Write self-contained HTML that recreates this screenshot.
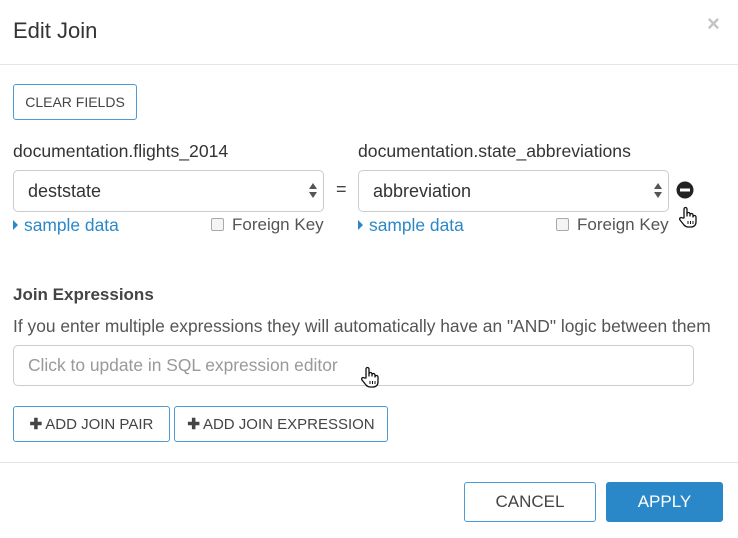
<!DOCTYPE html>
<html><head><style>
*{box-sizing:border-box;margin:0;padding:0}
body{width:738px;height:538px;background:#fff;font-family:"Liberation Sans",sans-serif;color:#444;position:relative;overflow:hidden}
.a{position:absolute}
.btn{position:absolute;border:1px solid #4a9bd6;border-radius:3px;background:#fff;color:#444;font-size:15px;display:flex;align-items:center;justify-content:center}
.sel{position:absolute;border:1px solid #ccc;border-radius:5px;height:42px;font-size:18px;color:#333;padding-left:14px;display:flex;align-items:center}
.lbl{font-size:17.6px;color:#333}
.link{font-size:17.4px;color:#2a88c8}
.cb{position:absolute;width:13px;height:13px;border:1px solid #aaa;border-radius:2px;background:#f4f4f4}
.fk{font-size:17px;color:#555}
.tri{display:inline-block;width:0;height:0;border-left:5px solid #2a88c8;border-top:5px solid transparent;border-bottom:5px solid transparent;margin-right:6px;vertical-align:1px}
</style></head><body>
<div class="a" style="left:13px;top:18px;font-size:22px;color:#333">Edit Join</div>
<div class="a" style="left:707px;top:11px;font-size:22px;color:#c4c4c4;font-weight:bold">×</div>
<div class="a" style="left:0;top:64px;width:738px;height:1px;background:#e5e5e5"></div>
<div class="btn" style="left:13px;top:84px;width:124px;height:36px;font-size:14px">CLEAR FIELDS</div>
<div class="a lbl" style="left:13px;top:141px">documentation.flights_2014</div>
<div class="a lbl" style="left:358px;top:141px">documentation.state_abbreviations</div>
<div class="sel" style="left:13px;top:170px;width:311px">deststate</div>
<div class="sel" style="left:358px;top:170px;width:311px">abbreviation</div>
<svg class="a" style="left:308px;top:182px" width="10" height="17"><path d="M5 1L9 7H1Z M5 16L9 10H1Z" fill="#555"/></svg>
<svg class="a" style="left:653px;top:182px" width="10" height="17"><path d="M5 1L9 7H1Z M5 16L9 10H1Z" fill="#555"/></svg>
<div class="a" style="left:336px;top:179px;font-size:18px;color:#444">=</div>
<svg class="a" style="left:676px;top:181px" width="18" height="18"><circle cx="9" cy="9" r="8.5" fill="#222"/><rect x="4" y="7.5" width="10" height="3" fill="#fff"/></svg>
<svg class="a" style="left:678px;top:206px" width="20" height="22" viewBox="0 0 20 22"><path d="M6 12V3a1.5 1.5 0 0 1 3 0v7V8a1.5 1.5 0 0 1 3 0v2V9a1.5 1.5 0 0 1 3 0v2a1.5 1.5 0 0 1 3 0v5c0 3-2 5-5 5H10c-2 0-3-1-4-2l-4-5a1.5 1.5 0 0 1 2.3-2Z" fill="#fff" stroke="#111" stroke-width="1.3" stroke-linejoin="round"/><path d="M10 15v3M12.5 15v3M15 15v3" stroke="#111" stroke-width="1"/></svg>
<div class="a link" style="left:13px;top:215px"><span class="tri"></span>sample data</div>
<div class="a link" style="left:358px;top:215px"><span class="tri"></span>sample data</div>
<div class="cb" style="left:211px;top:218px"></div><div class="a fk" style="left:232px;top:215px">Foreign Key</div>
<div class="cb" style="left:556px;top:218px"></div><div class="a fk" style="left:577px;top:215px">Foreign Key</div>
<div class="a" style="left:13px;top:285px;font-size:17px;font-weight:bold;color:#444">Join Expressions</div>
<div class="a" style="left:13px;top:316px;font-size:17.4px;color:#555">If you enter multiple expressions they will automatically have an "AND" logic between them</div>
<div class="sel" style="left:13px;top:345px;width:681px;height:41px;color:#999;font-size:17.4px">Click to update in SQL expression editor</div>
<svg class="a" style="left:360px;top:366px" width="20" height="22" viewBox="0 0 20 22"><path d="M6 12V3a1.5 1.5 0 0 1 3 0v7V8a1.5 1.5 0 0 1 3 0v2V9a1.5 1.5 0 0 1 3 0v2a1.5 1.5 0 0 1 3 0v5c0 3-2 5-5 5H10c-2 0-3-1-4-2l-4-5a1.5 1.5 0 0 1 2.3-2Z" fill="#fff" stroke="#111" stroke-width="1.3" stroke-linejoin="round"/><path d="M10 15v3M12.5 15v3M15 15v3" stroke="#111" stroke-width="1"/></svg>
<div class="btn" style="left:13px;top:406px;width:157px;height:36px"><b style="margin-right:3px">✚</b>ADD JOIN PAIR</div>
<div class="btn" style="left:174px;top:406px;width:214px;height:36px"><b style="margin-right:3px">✚</b>ADD JOIN EXPRESSION</div>
<div class="a" style="left:0;top:462px;width:738px;height:1px;background:#e5e5e5"></div>
<div class="btn" style="left:464px;top:482px;width:132px;height:40px;font-size:17px">CANCEL</div>
<div class="btn" style="left:606px;top:482px;width:117px;height:40px;font-size:17px;background:#2b88c8;border-color:#2b88c8;color:#fff">APPLY</div>
</body></html>
